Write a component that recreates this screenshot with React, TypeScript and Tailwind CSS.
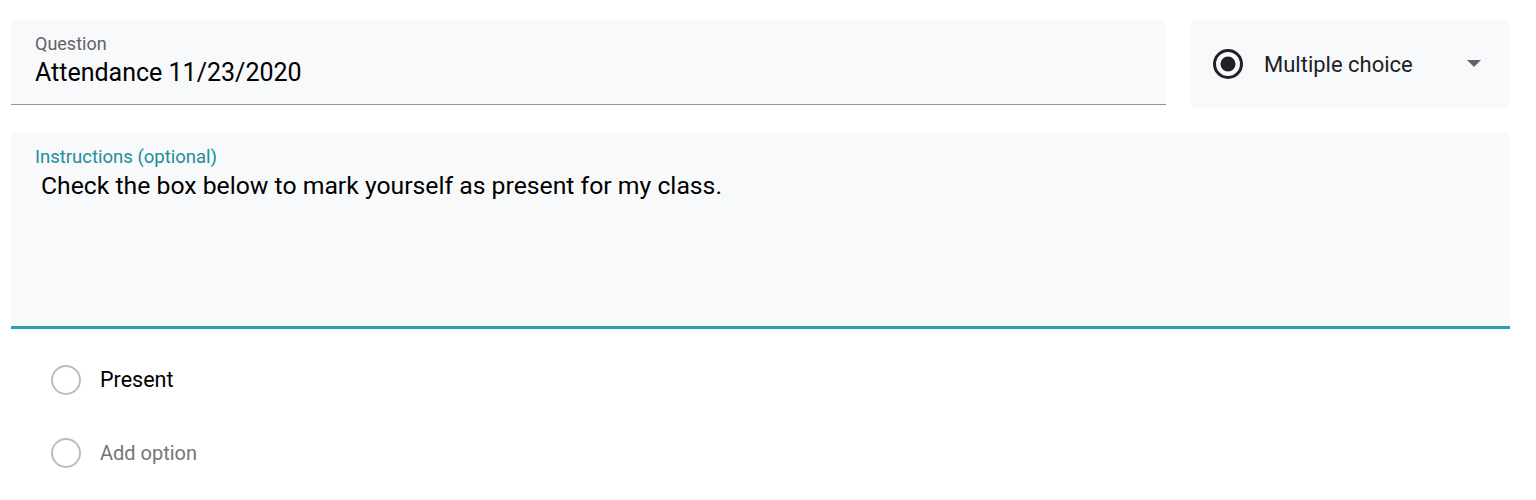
const font = { fontFamily: 'Roboto, "Liberation Sans", sans-serif' };

function RadioEmpty() {
  return (
    <span className="block h-[30px] w-[30px] rounded-full border-2 border-[#bdbdbd]" />
  );
}

function QuestionTypeSelect() {
  return (
    <div className="flex h-[88px] w-[319px] shrink-0 items-center rounded-[6px] bg-[#f8f9fa] pl-[21px] pr-[29px]">
      <svg width="32" height="32" viewBox="0 0 32 32" className="shrink-0">
        <circle cx="16" cy="16" r="13.5" fill="none" stroke="#202124" strokeWidth="3" />
        <circle cx="16" cy="16" r="7.5" fill="#202124" />
      </svg>
      <span className="ml-[20px] flex-1 text-[22px] text-[#202124]">Multiple choice</span>
      <svg width="14" height="8" viewBox="0 0 14 8">
        <path d="M0 0 L14 0 L7 7 Z" fill="#5f6368" />
      </svg>
    </div>
  );
}

export default function App() {
  return (
    <div className="min-h-[500px] bg-white px-[11px] pt-[20px] pr-[26px]" style={font}>
      <div className="flex gap-[25px]">
        <div className="h-[85px] flex-1 rounded-t-[4px] border-b-[1.5px] border-[#8f959b] bg-[#f8f9fa] px-[24px] pt-[13px]">
          <div className="text-[18px] leading-[22px] text-[#5f6368]">Question</div>
          <div className="mt-[3px] text-[25px] leading-[30px] text-black">Attendance 11/23/2020</div>
        </div>
        <QuestionTypeSelect />
      </div>

      <div className="mt-[25px] h-[196px] rounded-t-[6px] border-b-[3px] border-[#27a0b1] bg-[#f8f9fa] px-[24px] pt-[13px]">
        <div className="text-[18.5px] leading-[22px] text-[#1a8f9a]">Instructions (optional)</div>
        <div className="mt-[3px] pl-[6px] text-[24.75px] leading-[30px] text-black">
          Check the box below to mark yourself as present for my class.
        </div>
      </div>

      <div className="flex flex-col gap-[42px] pl-[40px] pt-[35px]">
        <div className="flex items-center gap-[19px]">
          <RadioEmpty />
          <span className="text-[21.5px] text-black">Present</span>
        </div>
        <div className="flex items-center gap-[19px]">
          <RadioEmpty />
          <span className="text-[20px] text-[#757575]">Add option</span>
        </div>
      </div>
    </div>
  );
}
